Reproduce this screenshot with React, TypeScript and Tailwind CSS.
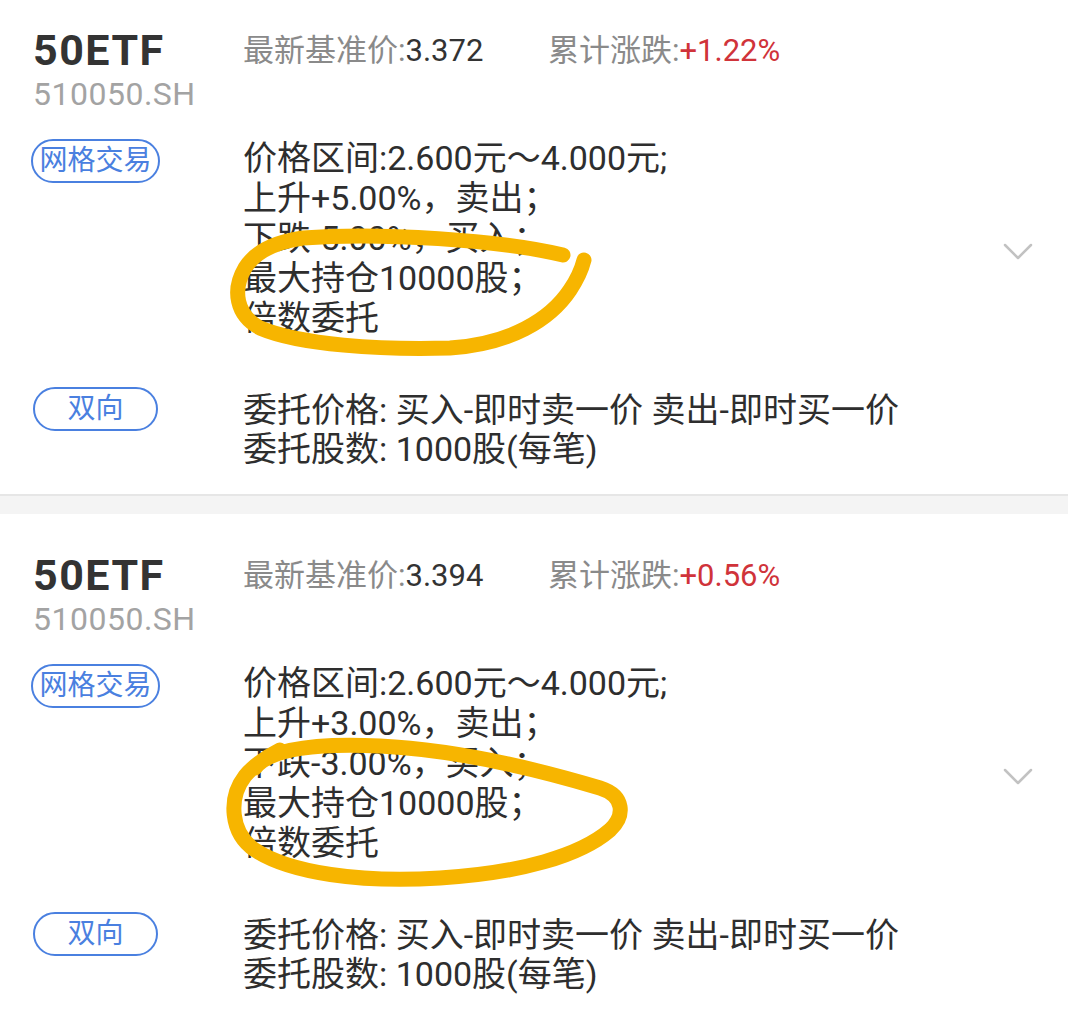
import React from 'react';

interface GridCardProps {
  price: string;
  change: string;
  step: string;
  top: number;
  mark: string;
}

const Chevron = () => (
  <svg width="32" height="20" viewBox="0 0 32 20" fill="none">
    <polyline points="3,3 16,16 29,3" stroke="#c2c2c2" strokeWidth="2.5" strokeLinecap="round" strokeLinejoin="round" />
  </svg>
);

const GridCard: React.FC<GridCardProps> = ({ price, change, step, top, mark }) => {
  return (
    <div className="relative">
      <div className="flex items-center pl-[31px] pr-[34px] pt-[40px] pb-[25px]">
        <div className="flex-1">
          {/* header */}
          <div className="flex items-start">
            <div className="w-[212px] shrink-0 pl-[2px]">
              <div className="text-[43px] leading-[42px] font-bold tracking-[1.5px] text-[#333333]">50ETF</div>
              <div className="text-[32px] leading-[46px] tracking-[0.5px] text-[#a3a3a3]">510050.SH</div>
            </div>
            <div className="text-[31px] leading-[44px] text-[#8a8a8a] w-[305px]">
              最新基准价:<span className="text-[#333333]">{price}</span>
            </div>
            <div className="text-[31px] leading-[44px] text-[#8a8a8a]">
              累计涨跌:<span className="text-[#d0333a]">{change}</span>
            </div>
          </div>

          {/* grid rule */}
          <div className="flex items-start mt-[21px]">
            <div className="w-[212px] shrink-0 pt-[1px]">
              <span className="inline-flex items-center justify-center h-[44px] w-[129px] rounded-full border-2 border-[#4a80e0] text-[#4a80e0] text-[28px]">
                网格交易
              </span>
            </div>
            <div className="text-[34px] leading-[40px] text-[#2e2e2e]">
              <div>价格区间:2.600元～4.000元;</div>
              <div>上升+{step}%，卖出；</div>
              <div>下跌-{step}%，买入；</div>
              <div>最大持仓10000股；</div>
              <div>倍数委托</div>
            </div>
          </div>

          {/* order rule */}
          <div className="flex items-start mt-[49px]">
            <div className="w-[212px] shrink-0 pl-[2px]">
              <span className="inline-flex items-center justify-center h-[44px] w-[125px] rounded-full border-2 border-[#4a80e0] text-[#4a80e0] text-[28px]">
                双向
              </span>
            </div>
            <div className="text-[34px] leading-[39px] text-[#2e2e2e] pt-[4px]">
              <div>委托价格: 买入-即时卖一价 卖出-即时买一价</div>
              <div>委托股数: 1000股(每笔)</div>
            </div>
          </div>
        </div>
        <div className="shrink-0 mt-[6px]">
          <Chevron />
        </div>
      </div>
      <div className="border-t-2 border-[#e6e6e6] h-[20px] bg-[#f4f4f4]" />

      {/* hand-drawn highlight */}
      <svg
        className="absolute left-0 top-0 pointer-events-none"
        width="1068"
        height="505"
        viewBox={`0 ${top} 1068 505`}
        fill="none"
      >
        <path d={mark} stroke="#f7b500" strokeWidth="15" strokeLinecap="round" strokeLinejoin="round" />
      </svg>
    </div>
  );
};

export default function App() {
  return (
    <div className="bg-white min-h-screen overflow-hidden font-['Roboto','Noto_Sans_CJK_SC',sans-serif]">
      <div className="-mt-[11px]">
        <GridCard
          price="3.372"
          change="+1.22%"
          step="5.00"
          top={-11}
          mark="M563 255 C 500 240, 380 232, 303 238 C 275 242, 255 252, 245 268 C 232 290, 236 315, 260 328 C 300 345, 380 350, 450 348 C 510 344, 550 320, 570 290 C 578 278, 582 268, 584 260"
        />
        <GridCard
          price="3.394"
          change="+0.56%"
          step="3.00"
          top={516}
          mark="M255 770 C 270 750, 320 745, 380 748 C 460 752, 540 772, 600 790 C 625 798, 625 818, 610 832 C 580 858, 520 875, 440 880 C 360 885, 290 875, 255 852 C 230 835, 228 800, 245 778 C 255 766, 268 758, 280 752"
        />
      </div>
    </div>
  );
}
